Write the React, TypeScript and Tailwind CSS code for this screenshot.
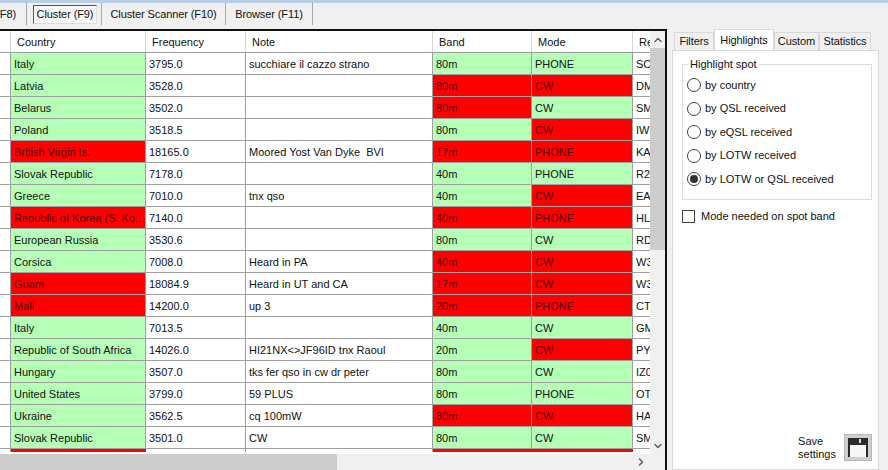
import { ChevronUp, ChevronDown, ChevronRight } from "lucide-react";

type Row = {
  country: string;
  freq: string;
  note: string;
  band: string;
  mode: string;
  re: string;
  countryBad?: boolean;
  bandBad?: boolean;
  modeBad?: boolean;
};

const rows: Row[] = [
  { country: "Italy", freq: "3795.0", note: "succhiare il cazzo strano", band: "80m", mode: "PHONE", re: "SC" },
  { country: "Latvia", freq: "3528.0", note: "", band: "80m", mode: "CW", re: "DM", bandBad: true, modeBad: true },
  { country: "Belarus", freq: "3502.0", note: "", band: "80m", mode: "CW", re: "SM", bandBad: true },
  { country: "Poland", freq: "3518.5", note: "", band: "80m", mode: "CW", re: "IW", modeBad: true },
  { country: "British Virgin Is.", freq: "18165.0", note: "Moored Yost Van Dyke  BVI", band: "17m", mode: "PHONE", re: "KA", countryBad: true, bandBad: true, modeBad: true },
  { country: "Slovak Republic", freq: "7178.0", note: "", band: "40m", mode: "PHONE", re: "R2" },
  { country: "Greece", freq: "7010.0", note: "tnx qso", band: "40m", mode: "CW", re: "EA", modeBad: true },
  { country: "Republic of Korea (S. Ko...", freq: "7140.0", note: "", band: "40m", mode: "PHONE", re: "HL", countryBad: true, bandBad: true, modeBad: true },
  { country: "European Russia", freq: "3530.6", note: "", band: "80m", mode: "CW", re: "RD" },
  { country: "Corsica", freq: "7008.0", note: "Heard in PA", band: "40m", mode: "CW", re: "W3", bandBad: true, modeBad: true },
  { country: "Guam", freq: "18084.9", note: "Heard in UT and CA", band: "17m", mode: "CW", re: "W3", countryBad: true, bandBad: true, modeBad: true },
  { country: "Mali", freq: "14200.0", note: "up 3", band: "20m", mode: "PHONE", re: "CT", countryBad: true, bandBad: true, modeBad: true },
  { country: "Italy", freq: "7013.5", note: "", band: "40m", mode: "CW", re: "GM" },
  { country: "Republic of South Africa", freq: "14026.0", note: "HI21NX<>JF96ID tnx Raoul", band: "20m", mode: "CW", re: "PY", modeBad: true },
  { country: "Hungary", freq: "3507.0", note: "tks fer qso in cw dr peter", band: "80m", mode: "CW", re: "IZ0" },
  { country: "United States", freq: "3799.0", note: "59 PLUS", band: "80m", mode: "PHONE", re: "OT" },
  { country: "Ukraine", freq: "3562.5", note: "cq 100mW", band: "80m", mode: "CW", re: "HA", bandBad: true, modeBad: true },
  { country: "Slovak Republic", freq: "3501.0", note: "CW", band: "80m", mode: "CW", re: "SM" },
];

const radios = [
  { label: "by country", on: false },
  { label: "by QSL received", on: false },
  { label: "by eQSL received", on: false },
  { label: "by LOTW received", on: false },
  { label: "by LOTW or QSL received", on: true },
];

function Flagged({ bad, width, children }: { bad?: boolean; width: string; children: string }) {
  return (
    <div
      className={`${width} h-full shrink-0 border-r border-[#a0a0a0] pl-[3px] pt-[1px] flex items-center whitespace-pre overflow-hidden ${
        bad ? "bg-[#ff0000] text-[#500000]" : "bg-[#b6ffb6]"
      }`}
    >
      {children}
    </div>
  );
}

function Plain({ width, children }: { width: string; children: string }) {
  return (
    <div className={`${width} h-full shrink-0 border-r border-[#a0a0a0] pl-[3px] pt-[1px] flex items-center whitespace-pre overflow-hidden`}>
      {children}
    </div>
  );
}

function Head({ width, children }: { width: string; children: string }) {
  return (
    <div className={`${width} h-full shrink-0 border-r border-[#d8d8d8] pl-[6px] pt-[1px] flex items-center whitespace-nowrap overflow-hidden`}>
      {children}
    </div>
  );
}

function Floppy() {
  return (
    <div className="w-[28px] h-[27px] bg-[#cfcfcf] border border-[#b8b8b8] flex items-center justify-center">
      <svg width="20" height="19" viewBox="0 0 20 19">
        <path d="M0 0h20v19h-2V7H2v12H0z" fill="#2b2b2b" />
        <path d="M2 0h14v6H2z" fill="#2b2b2b" />
        <rect x="11" y="1" width="2" height="4" fill="#d8d8d8" />
        <rect x="2" y="7" width="16" height="12" fill="#f6f6f6" />
      </svg>
    </div>
  );
}

export default function App() {
  return (
    <div className="w-[888px] h-[470px] overflow-hidden bg-[#f0f0f0] text-[11px] text-[#111] flex flex-col font-['Liberation_Sans',Arial,sans-serif]">
      <div className="h-[3px] shrink-0 bg-[#b9cfe6]" />

      <div className="flex flex-1 min-h-0">
        {/* Left side: toolbar and grid */}
        <div className="w-[667px] shrink-0 flex flex-col">
          <div className="h-[26px] shrink-0">
            <div className="h-[22px] flex items-center tracking-[-0.1px]">
              <div className="w-[27px] h-full shrink-0 flex items-center justify-end pr-[10px] border-r border-[#a8a8a8]">(F8)</div>
              <div className="w-[6px] shrink-0" />
              <div className="w-[64px] h-[19px] shrink-0 flex items-center justify-center whitespace-nowrap border border-t-[#555] border-l-[#555] border-r-[#ddd] border-b-[#ddd] bg-[#f8f8f8]">
                Cluster (F9)
              </div>
              <div className="w-[4px] shrink-0" />
              <div className="w-[1px] h-full bg-[#a8a8a8]" />
              <div className="w-[123px] h-full shrink-0 flex items-center justify-center whitespace-nowrap">Cluster Scanner (F10)</div>
              <div className="w-[1px] h-full bg-[#a8a8a8]" />
              <div className="w-[86px] h-full shrink-0 flex items-center justify-center whitespace-nowrap">Browser (F11)</div>
              <div className="w-[1px] h-full bg-[#a8a8a8]" />
            </div>
          </div>

          <div className="flex-1 min-h-0 flex flex-col border-t-2 border-r-2 border-[#111] bg-white">
            <div className="flex-1 min-h-0 flex">
              <div className="flex-1 min-w-0 overflow-hidden">
                <div className="h-[22px] flex border-b border-[#a0a0a0] bg-white">
                  <Head width="w-[11px]">{""}</Head>
                  <Head width="w-[135px]">Country</Head>
                  <Head width="w-[100px]">Frequency</Head>
                  <Head width="w-[187px]">Note</Head>
                  <Head width="w-[99px]">Band</Head>
                  <Head width="w-[101px]">Mode</Head>
                  <Head width="w-[40px]">Re</Head>
                </div>
                {rows.map((r, i) => (
                  <div key={i} className="h-[22px] flex border-b border-[#a0a0a0]">
                    <Plain width="w-[11px]">{""}</Plain>
                    <Flagged bad={r.countryBad} width="w-[135px]">{r.country}</Flagged>
                    <Plain width="w-[100px]">{r.freq}</Plain>
                    <Plain width="w-[187px]">{r.note}</Plain>
                    <Flagged bad={r.bandBad} width="w-[99px]">{r.band}</Flagged>
                    <Flagged bad={r.modeBad} width="w-[101px]">{r.mode}</Flagged>
                    <Plain width="w-[40px]">{r.re}</Plain>
                  </div>
                ))}
                <div className="h-[3px] flex">
                  <div className="w-[11px] shrink-0 border-r border-[#a0a0a0]" />
                  <div className="w-[135px] shrink-0 bg-[#ff0000]" />
                  <div className="w-[100px] shrink-0 border-r border-[#a0a0a0]" />
                  <div className="w-[187px] shrink-0 border-r border-[#a0a0a0]" />
                  <div className="w-[99px] shrink-0 bg-[#ff0000]" />
                  <div className="w-[101px] shrink-0 bg-[#ff0000]" />
                </div>
              </div>
              {/* vertical scrollbar */}
              <div className="w-[15px] shrink-0 bg-[#f0f0f0] flex flex-col">
                <div className="h-[17px] flex items-center justify-center">
                  <ChevronUp size={12} strokeWidth={3} color="#606060" />
                </div>
                <div className="h-[202px] bg-[#cdcdcd]" />
                <div className="flex-1" />
                <div className="h-[17px] flex items-center justify-center">
                  <ChevronDown size={12} strokeWidth={3} color="#606060" />
                </div>
              </div>
            </div>
            {/* horizontal scrollbar */}
            <div className="h-[16px] shrink-0 bg-[#f0f0f0] flex">
              <div className="w-[337px] bg-[#cdcdcd]" />
              <div className="flex-1" />
              <div className="w-[30px] flex items-center">
                <ChevronRight size={12} strokeWidth={3} color="#606060" />
              </div>
            </div>
          </div>
        </div>

        {/* Right side: tabs */}
        <div className="flex-1 min-w-0 pl-[5px] pr-[9px] pt-[26px] flex flex-col">
          <div className="h-[21px] shrink-0 flex items-end pl-[2px] tracking-[-0.1px]">
            <div className="w-[40px] h-[18px] bg-[#f0f0f0] border border-b-0 border-[#d9d9d9] flex items-center justify-center">Filters</div>
            <div className="w-[60px] h-[21px] bg-white border border-b-0 border-[#d9d9d9] flex items-center justify-center">Highlights</div>
            <div className="w-[45px] h-[18px] bg-[#f0f0f0] border border-b-0 border-[#d9d9d9] flex items-center justify-center">Custom</div>
            <div className="w-[52px] h-[18px] bg-[#f0f0f0] border border-b-0 border-[#d9d9d9] flex items-center justify-center">Statistics</div>
          </div>
          <div className="flex-1 min-h-0 bg-white border border-[#d9d9d9] pl-[9px] pr-[6px] pt-[6px] pb-[8px] flex flex-col">
            <fieldset className="h-[143px] shrink-0 border border-[#dcdcdc] pl-[4px]">
              <legend className="ml-[1px] px-[2px] leading-[14px]">Highlight spot</legend>
              <div className="flex flex-col gap-[9.5px] mt-[7px]">
                {radios.map((r) => (
                  <div key={r.label} className="flex items-center gap-[4px] h-[14px]">
                    <div className="w-[14px] h-[14px] rounded-full border border-[#444] bg-white flex items-center justify-center">
                      {r.on && <div className="w-[8px] h-[8px] rounded-full bg-[#333]" />}
                    </div>
                    <span>{r.label}</span>
                  </div>
                ))}
              </div>
            </fieldset>
            <div className="flex items-center gap-[6px] mt-[9px] h-[14px]">
              <div className="w-[13px] h-[13px] border border-[#444] bg-white" />
              <span>Mode needed on spot band</span>
            </div>
            <div className="flex-1" />
            <div className="flex items-center justify-end gap-[8px]">
              <div className="leading-[13px]">
                Save
                <br />
                settings
              </div>
              <Floppy />
            </div>
          </div>
        </div>
      </div>
    </div>
  );
}
